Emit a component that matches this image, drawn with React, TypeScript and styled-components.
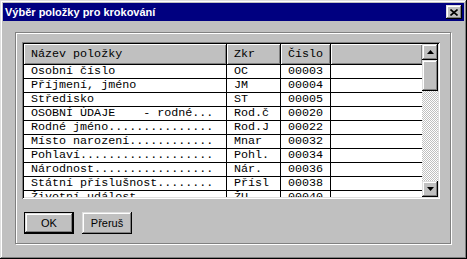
import React from "react";
import styled, { createGlobalStyle } from "styled-components";

const GlobalStyle = createGlobalStyle`
  html, body {
    margin: 0;
    padding: 0;
    background: #c0c0c0;
  }
  body {
    font-family: "Liberation Sans", Arial, sans-serif;
  }
`;

const raised = `
  box-shadow: inset -1px -1px #000, inset 1px 1px #dfdfdf,
    inset -2px -2px #808080, inset 2px 2px #fff;
`;

const Window = styled.div`
  width: 467px;
  height: 259px;
  box-sizing: border-box;
  padding: 3px;
  background: #c0c0c0;
  display: flex;
  flex-direction: column;
  ${raised}
`;

const TitleBar = styled.div`
  height: 18px;
  flex: 0 0 18px;
  background: #000080;
  color: #fff;
  display: flex;
  align-items: center;
  justify-content: space-between;
  padding: 0 2px 0 2px;
  font-weight: bold;
  font-size: 11px;
`;

const CloseButton = styled.div`
  width: 16px;
  height: 14px;
  background: #c0c0c0;
  display: flex;
  align-items: center;
  justify-content: center;
  ${raised}
`;

const Client = styled.div`
  flex: 1;
  display: flex;
  padding: 11px 13px 12px 12px;
`;

const Panel = styled.div`
  flex: 1;
  display: flex;
  flex-direction: column;
  border: 1px solid #808080;
  box-shadow: inset 1px 1px #fff, 1px 1px #fff;
  padding: 9px 0 0 6px;
`;

const Grid = styled.div`
  width: 418px;
  height: 157px;
  box-sizing: border-box;
  padding: 2px;
  display: flex;
  background: #c0c0c0;
  box-shadow: inset 1px 1px #808080, inset -1px -1px #fff,
    inset 2px 2px #000, inset -2px -2px #dfdfdf;
`;

const TableArea = styled.div`
  flex: 1;
  overflow: hidden;
  background: #fff;
  display: grid;
  grid-template-columns: 203px 54px 50px 91px;
  grid-auto-rows: 14px;
  grid-template-rows: 21px;
  font-family: "Liberation Mono", "Courier New", monospace;
  font-size: 11.7px;
  color: #000;
`;

const HeadCell = styled.div<{ $last?: boolean }>`
  box-sizing: border-box;
  height: 21px;
  background: #c0c0c0;
  border-bottom: 1px solid #000;
  border-right: ${(p) => (p.$last ? "none" : "1px solid #000")};
  box-shadow: inset 1px 1px #fff, inset -1px -1px #808080;
  padding-left: 7px;
  line-height: 20px;
  white-space: pre;
`;

const Cell = styled.div<{ $last?: boolean }>`
  box-sizing: border-box;
  height: 14px;
  border-bottom: 1px solid #000;
  border-right: ${(p) => (p.$last ? "none" : "1px solid #000")};
  padding-left: 7px;
  line-height: 13px;
  white-space: pre;
  overflow: hidden;
`;

const ScrollBar = styled.div`
  width: 16px;
  flex: 0 0 16px;
  display: flex;
  flex-direction: column;
  background-image: conic-gradient(#fff 25%, #c0c0c0 0 50%, #fff 0 75%, #c0c0c0 0);
  background-size: 2px 2px;
`;

const ScrollButton = styled.div`
  width: 16px;
  height: 16px;
  flex: 0 0 16px;
  background: #c0c0c0;
  display: flex;
  align-items: center;
  justify-content: center;
  ${raised}
`;

const Thumb = styled.div`
  height: 31px;
  flex: 0 0 31px;
  background: #c0c0c0;
  ${raised}
`;

const Spacer = styled.div`
  flex: 1;
`;

const ButtonRow = styled.div`
  display: flex;
  gap: 8px;
  margin-top: 13px;
  padding-left: 2px;
`;

const Button = styled.button<{ $default?: boolean }>`
  width: 50px;
  height: 22px;
  box-sizing: border-box;
  margin: 0;
  padding: 0;
  background: #c0c0c0;
  font-family: "Liberation Sans", Arial, sans-serif;
  font-size: 11px;
  color: #000;
  border: ${(p) => (p.$default ? "1px solid #000" : "none")};
  ${raised}
`;

const rows: [string, string, string][] = [
  ["Osobní číslo", "OC", "00003"],
  ["Příjmení, jméno", "JM", "00004"],
  ["Středisko", "ST", "00005"],
  ["OSOBNÍ ÚDAJE    - rodné...", "Rod.č", "00020"],
  ["Rodné jméno...............", "Rod.J", "00022"],
  ["Místo narození............", "Mnar", "00032"],
  ["Pohlaví...................", "Pohl.", "00034"],
  ["Národnost.................", "Nár.", "00036"],
  ["Státní příslušnost........", "Přísl", "00038"],
  ["Životní událost...........", "ŽU", "00040"],
  ["Rodinný stav..............", "Rod.s", "00042"],
];

function Arrow({ down }: { down?: boolean }) {
  return (
    <svg width="7" height="4" viewBox="0 0 7 4">
      <polygon points={down ? "0,0 7,0 3.5,4" : "3.5,0 7,4 0,4"} fill="#000" />
    </svg>
  );
}

export default function App() {
  return (
    <>
      <GlobalStyle />
      <Window>
        <TitleBar>
          <span>Výběr položky pro krokování</span>
          <CloseButton>
            <svg width="8" height="7" viewBox="0 0 8 7">
              <path d="M0.5 0.5 L7.5 6.5 M7.5 0.5 L0.5 6.5" stroke="#000" strokeWidth="1.6" />
            </svg>
          </CloseButton>
        </TitleBar>
        <Client>
          <Panel>
            <Grid>
              <TableArea>
                <HeadCell>Název položky</HeadCell>
                <HeadCell>Zkr</HeadCell>
                <HeadCell>Číslo</HeadCell>
                <HeadCell $last />
                {rows.map(([name, zkr, num]) => (
                  <React.Fragment key={num}>
                    <Cell>{name}</Cell>
                    <Cell>{zkr}</Cell>
                    <Cell>{num}</Cell>
                    <Cell $last />
                  </React.Fragment>
                ))}
              </TableArea>
              <ScrollBar>
                <ScrollButton>
                  <Arrow />
                </ScrollButton>
                <Thumb />
                <Spacer />
                <ScrollButton>
                  <Arrow down />
                </ScrollButton>
              </ScrollBar>
            </Grid>
            <ButtonRow>
              <Button $default>OK</Button>
              <Button>Přeruš</Button>
            </ButtonRow>
          </Panel>
        </Client>
      </Window>
    </>
  );
}
